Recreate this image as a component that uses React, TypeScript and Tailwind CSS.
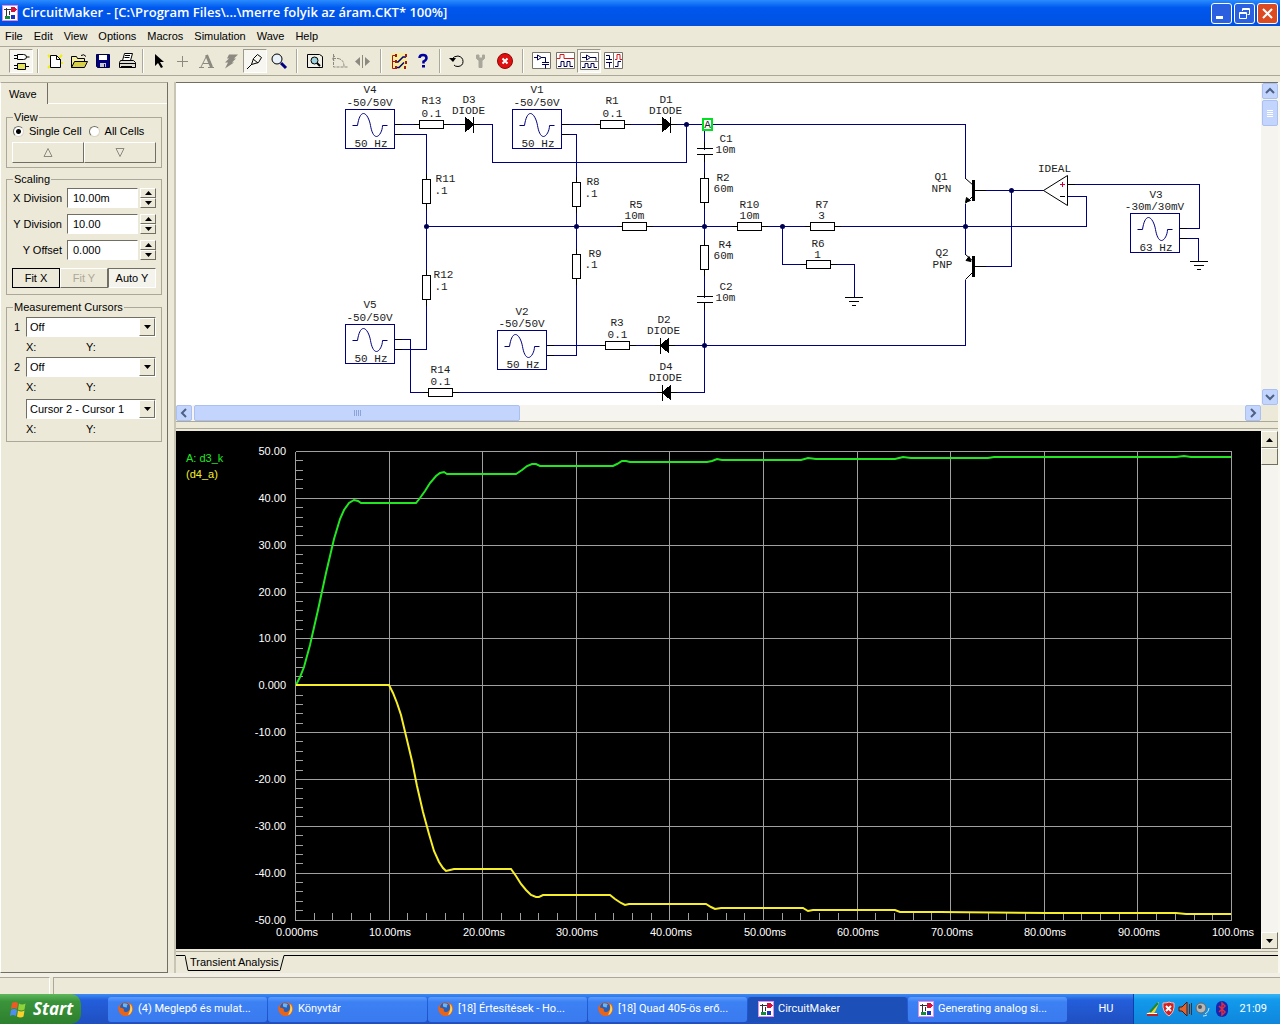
import { useState, type ReactNode } from 'react';
import clsx from 'clsx';

const NAVY = '#000080';

/* ---------- icons ---------- */

function AppIcon() {
  return (
    <svg width="16" height="16" viewBox="0 0 16 16" className="shrink-0" shapeRendering="crispEdges">
      <rect x="0.5" y="0.5" width="15" height="15" fill="#fff" stroke="#e58be5" />
      <path d="M2 4.500h7M4.500 3v9M7 5.500v4" stroke="#333" fill="none" />
      <path d="M9 2h3l3 2.500l-3 2.500h-3z" fill="#d4143c" />
      <rect x="3" y="11" width="5" height="3" fill="#158a3a" />
      <rect x="9" y="10" width="4" height="4" fill="#1733c4" />
    </svg>
  );
}

function FirefoxIcon() {
  return (
    <svg width="16" height="16" viewBox="0 0 16 16" className="shrink-0">
      <circle cx="7.5" cy="8" r="7" fill="#e8641b" />
      <circle cx="7" cy="6.5" r="5" fill="#2a5fb8" />
      <path d="M5 2.500a5 5 0 0 1 5 1q-2 1-1 3q-2 0-4-1z" fill="#6fb4ea" />
      <path d="M1 4q0 3 3 3l2 1q-1 2 1 3q4 1 6-3l0-6q4 6 0 11q-6 4-10 0q-4-4-2-9z" fill="#e8641b" />
      <path d="M12 3q3 3 2 7q-1 3-4 4q3-5 2-11z" fill="#fbd34d" />
    </svg>
  );
}

function WindowsFlag() {
  return (
    <svg width="18" height="18" viewBox="0 0 18 18" className="shrink-0">
      <path d="M3 3q3-2 6 0l-1 6q-3-2-6 0z" fill="#ee5a24" />
      <path d="M10 3.500q3 2 6.500 0l-1 6q-3 2-6.500 0z" fill="#8ed23c" />
      <path d="M2 10q3-2 6 0l-1 6q-3-2-6 0z" fill="#4f8df0" />
      <path d="M9 10.500q3 2 6.500 0l-1 6q-3 2-6.500 0z" fill="#fccf2b" />
    </svg>
  );
}

function Icon({ children }: { children: ReactNode }) {
  return (
    <svg width="22" height="22" viewBox="1 1 22 22" fill="none" stroke="#000" className="block">
      {children}
    </svg>
  );
}

const icons = {
  gates: (
    <Icon>
      <path d="M8.500 5.500h6q3 0 3 2.500t-3 2.500h-6zM5 6.500h3M5 9.500h3M17.500 8h3" fill="#fff" />
      <path d="M8.500 14.500h8v6h-8zM5 16.500h3M5 19.500h3M17 17.500h3" fill="#e4e45c" />
    </Icon>
  ),
  newFile: (
    <Icon>
      <path d="M5 6l3 3M5 19l3-3M19 6l-3 3M20 14h-3" stroke="#f0f000" strokeWidth="2" />
      <path d="M7.500 6.500h6l4 4v8h-10z" fill="#fff" />
      <path d="M13.500 6.500v4h4" />
    </Icon>
  ),
  open: (
    <Icon>
      <path d="M4.500 18.500v-11h5l1 2h7v3" fill="#f4f0a0" />
      <path d="M4.500 18.500l3-6h13l-3 6z" fill="#d8d048" />
      <path d="M14 6.500q3-2 5 1" />
    </Icon>
  ),
  save: (
    <Icon>
      <path d="M5.500 5.500h13v13h-12l-1-1z" fill="#000080" stroke="#000040" />
      <path d="M8 6h8v5h-8z" fill="#fff" stroke="none" />
      <path d="M9 14h6v4h-6z" fill="#c8c8c8" stroke="none" />
      <path d="M13 15h1v3h-1z" fill="#000080" stroke="none" />
    </Icon>
  ),
  print: (
    <Icon>
      <path d="M7.500 11.500l2-7h8l-2 7" fill="#fff" />
      <path d="M10 6.500h5M9.500 8.500h5" />
      <path d="M5.500 11.500h13l2 2v5h-16v-5z" fill="#dedcd0" />
      <path d="M4.500 14.500h16M6 17.500h11" />
    </Icon>
  ),
  select: (
    <Icon>
      <path d="M8 5v12l3-3l3 5l2-1l-3-5h4z" fill="#000" stroke="none" />
    </Icon>
  ),
  plus: (
    <Icon>
      <path d="M6 12.500h11M11.500 7v11" stroke="#8c8a80" />
    </Icon>
  ),
  text: (
    <Icon>
      <path d="M4 18.500h5M13 18.500h6M6 18l6-12l5 12M8 14.500h7" stroke="#8c8a80" />
      <path d="M11.500 6l5 12" stroke="#8c8a80" strokeWidth="3" />
    </Icon>
  ),
  bolt: (
    <Icon>
      <path d="M10 5.500h9l-4 4h2l-4 4h2l-9 6l3-6h-3l4-4h-2z" fill="#8c8a80" stroke="none" />
    </Icon>
  ),
  probe: (
    <Icon>
      <path d="M4 20l5-6l2-5l4-4l4 3l-3 4l-5 2z" stroke="none" fill="#f8f8f0" />
      <path d="M4 20l5-5M8.500 15.500l2-6l4-4l4 3l-3 5zM10 10l5 4" />
    </Icon>
  ),
  zoom: (
    <Icon>
      <circle cx="10" cy="10" r="5" fill="#e8f2f8" />
      <path d="M14 14l5 5" stroke="#000080" strokeWidth="3" />
    </Icon>
  ),
  fit: (
    <Icon>
      <path d="M4.500 5.500h12l3 2v11h-15z" fill="#f2f1e8" />
      <circle cx="11.500" cy="11.500" r="3.500" fill="#9ed2dc" />
      <path d="M14 14l3 3" strokeWidth="2" />
    </Icon>
  ),
  rotate: (
    <Icon>
      <path d="M6.500 5v13h14M6 9.500h5M8 7l-3 2.500l3 2.500M11 9.500q6 1 6 8" stroke="#8c8a80" strokeDasharray="3 1" />
    </Icon>
  ),
  mirror: (
    <Icon>
      <path d="M11.500 6v13" stroke="#8c8a80" />
      <path d="M9 8v9l-5-4.500zM14 8v9l5-4.500z" fill="#8c8a80" stroke="none" />
    </Icon>
  ),
  check: (
    <Icon>
      <path d="M4 4h16v16h-16z" fill="#f6ee9c" stroke="none" />
      <path d="M8 6.500h-2.500v13h3M5.500 12.500h4" stroke="#a01818" />
      <path d="M9 13h2l5-5h3M9 18.500h3l5-5" stroke="#000080" strokeWidth="1.500" />
      <path d="M8 5h2v3h-2zM18 5h2v3h-2zM8 11h2v3h-2zM18 12h2v3h-2zM8 17h2v3h-2zM17 17h2v3h-2z" fill="#a01818" stroke="none" />
    </Icon>
  ),
  help: (
    <Icon>
      <path d="M8.500 9q0-3 3.500-3t3.500 3q0 2-3 3.500v2" stroke="#0000a0" strokeWidth="2.500" />
      <path d="M11 16h3v2.500h-3z" fill="#0000a0" stroke="none" />
    </Icon>
  ),
  undo: (
    <Icon>
      <path d="M7 10q2-3 6-3q5 1 5 5.500t-5 5q-3 0-4-1.500" />
      <path d="M4 9h7l-3 4z" fill="#000" stroke="none" />
    </Icon>
  ),
  wrench: (
    <Icon>
      <path d="M7.500 6v3.500l2.500 2v7h3v-7l2.500-2v-3.500l-2 0v3h-3.500v-3z" fill="#a9a79b" stroke="#a9a79b" />
    </Icon>
  ),
  stop: (
    <Icon>
      <circle cx="12" cy="12" r="7.500" fill="#e01010" stroke="#8c0808" />
      <path d="M9.500 9.500l5 5M14.500 9.500l-5 5" stroke="#fff" strokeWidth="2" />
    </Icon>
  ),
  schematic: (
    <Icon>
      <path d="M3.500 3.500h18v16h-18z" fill="#fff" stroke="#76746a" />
      <path d="M5 8.500h3M8.500 6v5l4-2.500zM12 8.500h4.500v5M13 13.500h7M13 15.500h7M16.500 15.500v4" stroke="#000050" />
    </Icon>
  ),
  waves: (
    <Icon>
      <path d="M3.500 3.500h18v16h-18z" fill="#fff" stroke="#76746a" />
      <path d="M4 9.500h3v-4h4v4h10" stroke="#d81818" />
      <path d="M5 17.500h3v-5h3v5h3v-5h3v5h3" stroke="#000050" />
    </Icon>
  ),
  splitH: (
    <Icon>
      <path d="M3.500 3.500h18v17h-18z" fill="#fff" stroke="#76746a" />
      <path d="M3 12.500h18" stroke="#76746a" />
      <path d="M5 8.500h4M9.500 6v5l4-2.500zM13 8.500h6v3M5 18.500h3v-4h3v4h3v-4h3v4h3" stroke="#000050" />
    </Icon>
  ),
  splitV: (
    <Icon>
      <path d="M3.500 3.500h18v16h-18z" fill="#fff" stroke="#76746a" />
      <path d="M12.500 3v16" stroke="#76746a" />
      <path d="M5 6.500h3.500v4M5 10.500h6M5 13.500h6M8.500 13.500v5M14 17.500h3v-5h3" stroke="#000050" />
      <path d="M14 10.500h2v-5h3v5h2" stroke="#d81818" />
    </Icon>
  ),
};

/* ---------- toolbar ---------- */

type ToolProps = { icon: ReactNode; label: string; pressed?: boolean };

function Tool({ icon, label, pressed }: ToolProps) {
  return (
    <button
      type="button"
      aria-label={label}
      className={clsx(
        'flex h-6 w-6 items-center justify-center border',
        pressed ? 'border-t-[#9d9a8b] border-l-[#9d9a8b] border-r-white border-b-white bg-[#f7f6f0]' : 'border-transparent',
      )}
    >
      {icon}
    </button>
  );
}

function Separator({ className = 'w-3' }: { className?: string }) {
  return (
    <div className={clsx('flex h-6 justify-center', className)}>
      <div className="w-[2px] border-l border-[#aca899] bg-white" />
    </div>
  );
}

function Toolbar() {
  return (
    <div className="flex h-[30px] items-center border-t border-b border-[#aca899] pl-[9px]">
      <Tool icon={icons.gates} label="Parts" pressed />
      <Separator className="w-[10px]" />
      <Tool icon={icons.newFile} label="New" />
      <Tool icon={icons.open} label="Open" />
      <Tool icon={icons.save} label="Save" />
      <Tool icon={icons.print} label="Print" />
      <Separator className="w-2" />
      <Tool icon={icons.select} label="Select" />
      <Tool icon={icons.plus} label="Wire" />
      <Tool icon={icons.text} label="Text" />
      <Tool icon={icons.bolt} label="Delete" />
      <Tool icon={icons.probe} label="Probe" pressed />
      <Tool icon={icons.zoom} label="Zoom" />
      <Separator />
      <Tool icon={icons.fit} label="Fit" />
      <Tool icon={icons.rotate} label="Rotate" />
      <Tool icon={icons.mirror} label="Mirror" />
      <Separator />
      <Tool icon={icons.check} label="Digital options" />
      <Tool icon={icons.help} label="Help" />
      <Separator className="w-[10px]" />
      <Tool icon={icons.undo} label="Reset" />
      <Tool icon={icons.wrench} label="Setup" />
      <Tool icon={icons.stop} label="Stop" />
      <Separator />
      <Tool icon={icons.schematic} label="Schematic" />
      <Tool icon={icons.waves} label="Waveforms" />
      <Tool icon={icons.splitH} label="Split horizontally" pressed />
      <Tool icon={icons.splitV} label="Split vertically" />
    </div>
  );
}

/* ---------- title bar and menu ---------- */

function TitleBar() {
  const button = 'flex h-[21px] w-[21px] items-center justify-center rounded-[3px] border border-white';
  return (
    <header className="flex h-[26px] items-center bg-linear-to-b from-[#2a8bff] via-[#0058ee] via-30% to-[#0050e0] pr-[2px] pl-[2px]">
      <AppIcon />
      <h1 className="ml-1 flex-1 truncate font-['Open_Sans','Liberation_Sans',sans-serif] text-[13px] font-semibold text-white">
        CircuitMaker - [C:\Program Files\...\merre folyik az áram.CKT* 100%]
      </h1>
      <div className="flex gap-[2px]">
        <button type="button" aria-label="Minimize" className={clsx(button, 'bg-[#2a5fe0]')}>
          <svg width="17" height="17" viewBox="0 0 17 17">
            <path d="M3 11h7v3h-7z" fill="#fff" />
          </svg>
        </button>
        <button type="button" aria-label="Restore" className={clsx(button, 'bg-[#2a5fe0]')}>
          <svg width="17" height="17" viewBox="0 0 17 17" fill="none" stroke="#fff">
            <path d="M3.500 7.500h7v6h-7zM3 8.500h8M6.500 6v-2.500h7v6h-2M6 4.500h8" />
          </svg>
        </button>
        <button type="button" aria-label="Close" className={clsx(button, 'bg-[#dc4a22]')}>
          <svg width="17" height="17" viewBox="0 0 17 17" stroke="#fff" strokeWidth="2">
            <path d="M4 4l9 9M13 4l-9 9" />
          </svg>
        </button>
      </div>
    </header>
  );
}

const menus = ['File', 'Edit', 'View', 'Options', 'Macros', 'Simulation', 'Wave', 'Help'];

function MenuBar() {
  return (
    <nav className="flex h-5 items-center gap-[11px] pl-[5px]">
      {menus.map((menu) => (
        <button key={menu} type="button">
          {menu}
        </button>
      ))}
    </nav>
  );
}

/* ---------- wave panel ---------- */

const raised = 'border border-t-white border-l-white border-r-[#716f64] border-b-[#716f64]';
const sunken = 'border border-t-[#716f64] border-l-[#716f64] border-r-white border-b-white';

function Group({ title, className, children }: { title: string; className?: string; children: ReactNode }) {
  return (
    <fieldset className={clsx('mx-[5px] min-w-0 border border-[#aca899] px-[5px]', className)}>
      <legend className="ml-[1px] h-[14px] px-[1px] leading-[14px]">{title}</legend>
      {children}
    </fieldset>
  );
}

function CellOption({ label, checked }: { label: string; checked?: boolean }) {
  return (
    <label className="flex items-center gap-[5px] whitespace-nowrap">
      <input
        type="radio"
        name="cells"
        defaultChecked={checked}
        className="ml-[1px] h-[11px] w-[11px] appearance-none rounded-full border border-t-[#716f64] border-l-[#716f64] border-r-[#d8d5c6] border-b-[#d8d5c6] bg-white checked:bg-[radial-gradient(circle,#000_2px,#fff_3px)]"
      />
      {label}
    </label>
  );
}

function Spin({ label, value }: { label: string; value: string }) {
  const [current, setCurrent] = useState(value);
  return (
    <div className="flex h-[26px] items-start">
      <label className="flex flex-1 items-center justify-end pr-[6px] leading-5 whitespace-nowrap">
        {label}
        <input
          type="text"
          value={current}
          onChange={(e) => setCurrent(e.target.value)}
          className={clsx('-mr-1 ml-[5px] h-5 w-[71px] bg-white px-[5px] outline-none', sunken)}
        />
      </label>
      <div className="flex w-4 flex-col">
        <button type="button" aria-label={`${label} up`} className={clsx('flex h-[10px] items-center justify-center', raised)}>
          <svg width="7" height="4" viewBox="0 0 7 4">
            <path d="M0 4l3.500-4l3.500 4z" />
          </svg>
        </button>
        <button type="button" aria-label={`${label} down`} className={clsx('flex h-[10px] items-center justify-center', raised)}>
          <svg width="7" height="4" viewBox="0 0 7 4">
            <path d="M0 0l3.500 4l3.500-4z" />
          </svg>
        </button>
      </div>
    </div>
  );
}

function Cursor({ index, option, className }: { index?: string; option: string; className?: string }) {
  return (
    <div className={className}>
      <div className="flex items-center">
        <label htmlFor={`cursor-${index ?? 'diff'}`} className="w-[14px] pl-[2px]">
          {index}
        </label>
        <div className="relative flex-1">
          <select
            id={`cursor-${index ?? 'diff'}`}
            aria-label={index ? undefined : 'Difference'}
            className={clsx('block h-5 w-full appearance-none bg-white pl-[3px] outline-none', sunken)}
          >
            <option>{option}</option>
          </select>
          <span className={clsx('pointer-events-none absolute top-[1px] right-[1px] flex h-[18px] w-4 items-center justify-center bg-[#ece9d8]', raised)}>
            <svg width="7" height="4" viewBox="0 0 7 4">
              <path d="M0 0l3.500 4l3.500-4z" />
            </svg>
          </span>
        </div>
      </div>
      <div className="flex h-5 pl-[14px] leading-5">
        <span className="w-[60px]">X:</span>
        <span>Y:</span>
      </div>
    </div>
  );
}

function WavePanel() {
  return (
    <aside className="flex w-[168px] shrink-0 flex-col border border-t-[#aca899] border-r-[#716f64] border-b-[#716f64] border-l-white">
      <div className="flex h-[21px]">
        <button type="button" className="w-[47px] border-r border-[#716f64] text-left indent-2 leading-5">
          Wave
        </button>
        <div className="flex-1 border-b border-white" />
      </div>
      <Group title="View" className="mt-[6px] h-[58px]">
        <div className="flex h-[14px] items-center gap-[6px]">
          <CellOption label="Single Cell" checked />
          <CellOption label="All Cells" />
        </div>
        <div className="mt-1 flex">
          <button type="button" aria-label="Previous cell" className={clsx('flex h-[21px] flex-1 items-center justify-center', raised)}>
            <svg width="10" height="9" viewBox="0 0 10 9" fill="none" stroke="#8c8a80">
              <path d="M1 8.500l4-8l4 8z" />
            </svg>
          </button>
          <button type="button" aria-label="Next cell" className={clsx('flex h-[21px] flex-1 items-center justify-center', raised)}>
            <svg width="10" height="9" viewBox="0 0 10 9" fill="none" stroke="#8c8a80">
              <path d="M1 0.500l4 8l4-8z" />
            </svg>
          </button>
        </div>
      </Group>
      <Group title="Scaling" className="mt-1 h-[123px]">
        <div className="pt-[2px]">
          <Spin label="X Division" value="10.00m" />
          <Spin label="Y Division" value="10.00" />
          <Spin label="Y Offset" value="0.000" />
        </div>
        <div className="mt-[2px] flex h-5">
          <button type="button" className="flex-1 border border-black">
            Fit X
          </button>
          <button type="button" disabled className={clsx('flex-1 text-[#aca899]', raised)}>
            Fit Y
          </button>
          <button type="button" className={clsx('flex-1 bg-[#f4f3ec]', sunken)}>
            Auto Y
          </button>
        </div>
      </Group>
      <Group title="Measurement Cursors" className="mt-[5px] h-[142px]">
        <Cursor index="1" option="Off" className="mt-[3px]" />
        <Cursor index="2" option="Off" />
        <Cursor option="Cursor 2 - Cursor 1" className="mt-[2px]" />
      </Group>
    </aside>
  );
}

/* ---------- schematic ---------- */

type Point = { x: number; y: number };

// every character takes a 7px cell that starts at x
function Label({ x, y, text }: Point & { text: string }) {
  return (
    <text x={x + text.length * 3.5} y={y} textAnchor="middle" fill="#222">
      {text}
    </text>
  );
}

// x, y is the centre of the body
function Resistor({ x, y, vertical }: Point & { vertical?: boolean }) {
  return vertical ? (
    <g stroke="#000" fill="#fff">
      <path d={`M${x} ${y - 18}v36`} />
      <rect x={x - 4} y={y - 12} width="8" height="24" />
    </g>
  ) : (
    <g stroke="#000" fill="#fff">
      <path d={`M${x - 18} ${y}h36`} />
      <rect x={x - 12} y={y - 4} width="24" height="8" />
    </g>
  );
}

function Diode({ x, y, left }: Point & { left?: boolean }) {
  return (
    <g stroke="#000" fill="#000">
      <path d={`M${x - 10} ${y}h20`} />
      {left ? (
        <path d={`M${x - 4} ${y - 8}v16M${x - 4} ${y}l8-7v14z`} />
      ) : (
        <path d={`M${x + 4} ${y - 8}v16M${x + 4} ${y}l-8-7v14z`} />
      )}
    </g>
  );
}

function Capacitor({ x, y }: Point) {
  return (
    <g stroke="#000">
      <rect x={x - 8} y={y - 2} width="17" height="4" fill="#fff" stroke="none" />
      <path d={`M${x - 8} ${y - 3}h16M${x - 8} ${y + 3}h16M${x} ${y - 10}v7M${x} ${y + 3}v7`} />
    </g>
  );
}

function Ground({ x, y }: Point) {
  return <path stroke="#000" d={`M${x - 9} ${y}h18M${x - 5} ${y + 4}h10M${x - 2} ${y + 8}h4`} />;
}

function Source({ x, y, hz = '50 Hz' }: Point & { hz?: string }) {
  return (
    <g>
      <rect x={x} y={y} width="49" height="39" fill="#fff" stroke={NAVY} />
      <path
        d={`M${x + 7} ${y + 16}h5c1-7 3-12 6-12s6 6 7 12s3 11 6 11s6-6 6-11h5`}
        fill="none"
        stroke={NAVY}
        shapeRendering="auto"
      />
      <path d={`M${x + 49} ${y + 15}h7M${x + 49} ${y + 25}h7`} stroke="#000" />
      <Label x={x + 8} y={y + 37} text={hz} />
    </g>
  );
}

const wires = [
  'M394.500 124.500H492.500V162.500H686.500V124.500',
  'M394.500 134.500H426.500V349.500H394.500',
  'M561.500 124.500H965.500V178.500',
  'M561.500 134.500H576.500V355.500H546.500',
  'M426.500 226.500H1086.500V196.500H1067.500',
  'M704.500 124.500V392.500H410.500V339.500H394.500',
  'M546.500 345.500H965.500V279.500',
  'M965.500 203.500V254.500',
  'M782.500 226.500V264.500H854.500V297.500',
  'M974.500 190.500H1043.500M1011.500 190.500V266.500H974.500',
  'M1067.500 184.500H1199.500V228.500H1180.500',
  'M1180.500 238.500H1198.500V261.500',
];

const joints: [number, number][] = [
  [686.5, 124.5],
  [426.5, 226.5],
  [576.5, 226.5],
  [704.5, 226.5],
  [782.5, 226.5],
  [965.5, 226.5],
  [1011.5, 190.5],
  [704.5, 345.5],
];

const labels: [number, number, string][] = [
  [363, 93, 'V4'],
  [345, 106, '-50/50V'],
  [421, 104, 'R13'],
  [421, 117, '0.1'],
  [462, 103, 'D3'],
  [451, 114, 'DIODE'],
  [530, 93, 'V1'],
  [512, 106, '-50/50V'],
  [605, 104, 'R1'],
  [602, 117, '0.1'],
  [659, 103, 'D1'],
  [648, 114, 'DIODE'],
  [719, 142, 'C1'],
  [715, 153, '10m'],
  [435, 182, 'R11'],
  [434, 194, '.1'],
  [586, 185, 'R8'],
  [584, 197, '.1'],
  [716, 181, 'R2'],
  [713, 192, '60m'],
  [629, 208, 'R5'],
  [624, 219, '10m'],
  [739, 208, 'R10'],
  [739, 219, '10m'],
  [815, 208, 'R7'],
  [818, 219, '3'],
  [718, 248, 'R4'],
  [713, 259, '60m'],
  [811, 247, 'R6'],
  [814, 258, '1'],
  [588, 257, 'R9'],
  [584, 268, '.1'],
  [433, 278, 'R12'],
  [434, 290, '.1'],
  [719, 290, 'C2'],
  [715, 301, '10m'],
  [363, 308, 'V5'],
  [345, 321, '-50/50V'],
  [515, 315, 'V2'],
  [497, 327, '-50/50V'],
  [610, 326, 'R3'],
  [607, 338, '0.1'],
  [657, 323, 'D2'],
  [646, 334, 'DIODE'],
  [430, 373, 'R14'],
  [430, 385, '0.1'],
  [659, 370, 'D4'],
  [648, 381, 'DIODE'],
  [934, 180, 'Q1'],
  [931, 192, 'NPN'],
  [935, 256, 'Q2'],
  [932, 268, 'PNP'],
  [1037, 172, 'IDEAL'],
  [1149, 198, 'V3'],
  [1123, 210, '-30m/30mV'],
];

function Schematic() {
  return (
    <svg
      width="1085"
      height="322"
      viewBox="176 83 1085 322"
      shapeRendering="crispEdges"
      fill="none"
      className="block shrink-0 font-['Liberation_Mono',monospace] text-[11px]"
    >
      <path d={wires.join('')} stroke={NAVY} />
      {joints.map(([x, y]) => (
        <circle key={`${x}-${y}`} cx={x} cy={y} r="2.500" fill="#000050" shapeRendering="auto" />
      ))}

      <Source x={345.5} y={109.5} />
      <Source x={512.5} y={109.5} />
      <Source x={345.5} y={324.5} />
      <Source x={497.5} y={330.5} />
      <Source x={1130.5} y={213.5} hz="63 Hz" />

      <Resistor x={431.5} y={124.5} />
      <Resistor x={612.5} y={124.5} />
      <Resistor x={634.5} y={226.5} />
      <Resistor x={749.5} y={226.5} />
      <Resistor x={822.5} y={226.5} />
      <Resistor x={818.5} y={264.5} />
      <Resistor x={617.5} y={345.5} />
      <Resistor x={440.5} y={392.5} />
      <Resistor x={426.5} y={191.5} vertical />
      <Resistor x={426.5} y={287.5} vertical />
      <Resistor x={576.5} y={194.5} vertical />
      <Resistor x={576.5} y={266.5} vertical />
      <Resistor x={704.5} y={190.5} vertical />
      <Resistor x={704.5} y={257.5} vertical />

      <Diode x={469.5} y={124.5} />
      <Diode x={666.5} y={124.5} />
      <Diode x={664.5} y={345.5} left />
      <Diode x={666.5} y={392.5} left />

      <Capacitor x={704.5} y={151.5} />
      <Capacitor x={704.5} y={299.5} />
      <Ground x={853.5} y={297.5} />
      <Ground x={1198.5} y={261.5} />

      {/* transistors */}
      <g stroke="#000" shapeRendering="auto">
        <path d="M965.500 178.500l8 7M973.500 195.500l-8 8M965.500 254.500l8 7M973.500 271.500l-8 8M974 190.500h12M974 266.500h12" />
        <path d="M973.500 180v21M973.500 256v21" strokeWidth="3" />
        <path d="M965.500 202.500l1-5l4 3zM971 261.500l-5-1l3-4z" fill="#000" />
      </g>

      {/* op-amp */}
      <path d="M1043.500 190.500l24-15v30z" fill="#fff" stroke="#000" shapeRendering="auto" />
      <path d="M1060 184.500h5M1062.500 182v5" stroke="#d00030" />
      <path d="M1060 196.500h5M1067.500 184.500h7" stroke="#000" />

      {/* probe */}
      <rect x="703" y="119" width="9" height="11" fill="#fff" stroke="#00e020" strokeWidth="2" />
      <Label x={704} y={128} text="A" />

      {labels.map(([x, y, text]) => (
        <Label key={`${x}-${y}`} x={x} y={y} text={text} />
      ))}
    </svg>
  );
}

/* ---------- scroll bars ---------- */

const xpThumb = 'rounded-[2px] border border-[#a9c0f0] bg-[#c4d5fd]';

function XpArrow({ d, label }: { d: string; label: string }) {
  return (
    <button type="button" aria-label={label} className={clsx('flex h-4 w-4 shrink-0 items-center justify-center', xpThumb)}>
      <svg width="10" height="10" viewBox="0 0 10 10" fill="none" stroke="#4d6185" strokeWidth="2">
        <path d={d} />
      </svg>
    </button>
  );
}

function ClassicArrow({ d, label }: { d: string; label: string }) {
  return (
    <button type="button" aria-label={label} className={clsx('flex h-[17px] w-[17px] items-center justify-center bg-[#ece9d8]', raised)}>
      <svg width="7" height="4" viewBox="0 0 7 4">
        <path d={d} />
      </svg>
    </button>
  );
}

function SchematicPane() {
  return (
    <section className="border-t border-b border-t-[#716f64] border-b-[#aca899]">
      <div className="flex h-[322px]">
        <div className="min-w-0 flex-1 overflow-hidden bg-white">
          <Schematic />
        </div>
        <div className="flex w-[17px] flex-col items-center bg-[#f5f4ee]">
          <XpArrow label="Scroll up" d="M1 7l4-4l4 4" />
          <div className={clsx('mt-[1px] flex h-[26px] w-4 flex-col items-center justify-center gap-[1px]', xpThumb)}>
            <span className="h-[1px] w-[6px] bg-white" />
            <span className="h-[1px] w-[6px] bg-white" />
            <span className="h-[1px] w-[6px] bg-white" />
            <span className="h-[1px] w-[6px] bg-white" />
          </div>
          <div className="flex-1" />
          <XpArrow label="Scroll down" d="M1 3l4 4l4-4" />
        </div>
      </div>
      <div className="flex h-4 items-center bg-[#f5f4ee]">
        <XpArrow label="Scroll left" d="M7 1l-4 4l4 4" />
        <div className={clsx('ml-[2px] flex h-4 w-[326px] items-center justify-center gap-[1px]', xpThumb)}>
          <span className="h-[6px] w-[1px] bg-[#8ca4d8]" />
          <span className="h-[6px] w-[1px] bg-[#8ca4d8]" />
          <span className="h-[6px] w-[1px] bg-[#8ca4d8]" />
          <span className="h-[6px] w-[1px] bg-[#8ca4d8]" />
        </div>
        <div className="flex-1" />
        <XpArrow label="Scroll right" d="M3 1l4 4l-4 4" />
        <div className="h-4 w-[17px] bg-[#ece9d8]" />
      </div>
    </section>
  );
}

/* ---------- transient analysis plot ---------- */

const LEFT = 119.5;
const TOP = 20.5;
const STEP_X = 93.6;
const STEP_Y = 46.85;

const xTicks = ['0.000ms', '10.00ms', '20.00ms', '30.00ms', '40.00ms', '50.00ms', '60.00ms', '70.00ms', '80.00ms', '90.00ms', '100.0ms'];
const yTicks = ['50.00', '40.00', '30.00', '20.00', '10.00', '0.000', '-10.00', '-20.00', '-30.00', '-40.00', '-50.00'];

const green =
  '120,254 124,246 128,236 134,214 142,179 150,142 158,108 164,88 168,79 173,72 178,69 182,70 185,72 240,72 244,67 249,60 254,52 260,45 264,42 268,41 271,43 340,43 346,39 351,35 356,33 360,33 364,35 437,35 441,33 446,30 450,30 454,31 531,31 536,30 541,28 546,29 625,29 632,27 640,28 719,28 727,26 735,27 812,27 818,26 1000,26 1008,25 1015,26 1055,26';
const yellow =
  '120,254 213,254 217,262 221,272 225,284 231,309 236,330 241,355 247,381 253,403 258,420 263,431 267,437 270,440 274,439 278,438 335,438 340,445 345,453 350,459 355,464 360,466 363,466 367,464 434,464 439,468 445,472 449,474 453,473 530,473 535,476 539,478 545,477 627,477 632,480 637,479 719,479 724,481 764,481 870,482 1000,482 1010,483 1055,483';

function Plot() {
  return (
    <svg
      viewBox="0 0 1085 518"
      preserveAspectRatio="xMinYMin meet"
      fill="none"
      className="block min-h-0 min-w-0 flex-1 font-['Liberation_Sans',sans-serif] text-[11px]"
    >
      <g stroke="#a0a0a0" shapeRendering="crispEdges">
        {xTicks.map((tick, i) => (
          <path key={tick} d={`M${Math.floor(LEFT + i * STEP_X) + 0.5} ${TOP}v469`} />
        ))}
        {yTicks.map((tick, i) => (
          <path key={tick} d={`M${LEFT} ${Math.floor(TOP + i * STEP_Y) + 0.5}h936`} />
        ))}
        {Array.from({ length: 50 }, (_, i) => (
          <path key={i} d={`M${LEFT} ${Math.floor(TOP + (i * STEP_Y) / 5) + 0.5}h7`} />
        ))}
        {Array.from({ length: 50 }, (_, i) => (
          <path key={i} d={`M${Math.floor(LEFT + (i * STEP_X) / 5) + 0.5} 482v7`} />
        ))}
      </g>
      <g fill="#fff">
        {yTicks.map((tick, i) => (
          <text key={tick} x="110" y={Math.floor(TOP + i * STEP_Y) + 4} textAnchor="end">
            {tick}
          </text>
        ))}
        {xTicks.map((tick, i) => (
          <text key={tick} x={Math.round(LEFT + i * STEP_X) + 1} y="505" textAnchor="middle">
            {tick}
          </text>
        ))}
      </g>
      <text x="10" y="31" fill="#22e622">
        A: d3_k
      </text>
      <text x="10" y="47" fill="#f5ee28">
        (d4_a)
      </text>
      <polyline points={green} stroke="#22e622" strokeWidth="2" />
      <polyline points={yellow} stroke="#f5ee28" strokeWidth="2" />
    </svg>
  );
}

function PlotPane() {
  return (
    <section className="mt-[6px] flex flex-1 flex-col border-t border-[#aca899] pt-[2px]">
      <div className="flex flex-1">
        <div className="flex min-w-0 flex-1 bg-black">
          <Plot />
        </div>
        <div className="flex w-[17px] flex-col bg-[#f5f4ee]">
          <ClassicArrow label="Scroll up" d="M0 4l3.500-4l3.500 4z" />
          <div className={clsx('h-[17px] bg-[#ece9d8]', raised)} />
          <div className="flex-1" />
          <ClassicArrow label="Scroll down" d="M0 0l3.500 4l3.500-4z" />
        </div>
      </div>
      <div className="mt-[2px] flex h-[22px] items-start border-t border-[#aca899] pt-[3px]">
        <div className="w-[9px] border-t border-black" />
        <svg width="4" height="16" viewBox="0 0 4 16" fill="none" stroke="#000">
          <path d="M0 0.500l3 15h1" />
        </svg>
        <button type="button" className="h-4 border-b border-black px-[1px] leading-[15px]">
          Transient Analysis
        </button>
        <svg width="5" height="16" viewBox="0 0 5 16" fill="none" stroke="#000">
          <path d="M0 15.500l4-15h1" />
        </svg>
        <div className="flex-1 border-t border-black" />
      </div>
    </section>
  );
}

/* ---------- taskbar ---------- */

const tasks = [
  { title: '(4) Meglepő és mulat...', icon: <FirefoxIcon /> },
  { title: 'Könyvtár', icon: <FirefoxIcon /> },
  { title: '[18] Értesítések - Ho...', icon: <FirefoxIcon /> },
  { title: '[18] Quad 405-ös erő...', icon: <FirefoxIcon /> },
  { title: 'CircuitMaker', icon: <AppIcon />, active: true },
  { title: 'Generating analog si...', icon: <AppIcon /> },
];

function Taskbar() {
  return (
    <footer className="flex h-[30px] items-stretch bg-linear-to-b from-[#3f8cf3] via-[#245edb] via-20% to-[#1f4fc0] font-['Roboto','Liberation_Sans',sans-serif] text-white">
      <button
        type="button"
        className="flex w-[81px] items-center gap-[6px] rounded-r-[10px] bg-linear-to-b from-[#5fb85c] via-[#3a943a] via-25% to-[#2d7f2d] pl-[9px] font-['Open_Sans','Liberation_Sans',sans-serif] text-[17px] font-bold italic"
      >
        <WindowsFlag />
        Start
      </button>
      <div className="ml-[27px] flex flex-1 items-center gap-[1px]">
        {tasks.map((task) => (
          <button
            key={task.title}
            type="button"
            className={clsx(
              'flex h-[25px] min-w-0 flex-1 items-center gap-1 rounded-[3px] pl-[10px]',
              task.active ? 'bg-[#1c4fb8]' : 'bg-linear-to-b from-[#5a9bff] via-[#3c81f3] via-20% to-[#3a7af0]',
            )}
          >
            {task.icon}
            <span className="truncate">{task.title}</span>
          </button>
        ))}
      </div>
      <button type="button" className="w-[66px] pl-3">
        HU
      </button>
      <div className="flex w-[147px] items-center justify-between border-l border-[#0b3fae] bg-linear-to-b from-[#35b4f5] via-[#129aec] via-20% to-[#0f86dc] pr-[13px] pl-[11px]">
        <svg width="88" height="16" viewBox="0 0 88 16">
          <path d="M1 13l6-3l6-9l1 1l-4 9l-3 3z" fill="#f2d12c" />
          <path d="M2 14h11" stroke="#c02020" strokeWidth="2" />
          <path d="M2 12.500h10" stroke="#fff" />
          <path d="M5 11l8-9" stroke="#158a3a" strokeWidth="2" />
          <path d="M18 2q5 0 6-1q2 1 5 1q1 9-5 13q-7-4-6-13z" fill="#d42020" stroke="#f0c0c0" />
          <path d="M21 5l5 5M26 5l-5 5" stroke="#fff" strokeWidth="2" />
          <path d="M34 6h3l5-5v14l-5-5h-3z" fill="#e0622c" stroke="#4a1a10" />
          <path d="M44.500 3v10M46.500 2v12" stroke="#5a2a1a" />
          <circle cx="56" cy="7" r="5" fill="#b8b8b8" stroke="#666" />
          <circle cx="55" cy="6" r="2" fill="#555" />
          <path d="M60 13q4-2 4-6M58 15q2 0 4-1" fill="none" stroke="#ddd" />
          <rect x="71" y="0" width="12" height="16" rx="6" fill="#1226b4" />
          <path d="M74 5l6 6l-3 3v-12l3 3l-6 6" fill="none" stroke="#e02c3c" strokeWidth="1.500" />
        </svg>
        <time>21:09</time>
      </div>
    </footer>
  );
}

export default function App() {
  return (
    <div className="flex min-h-screen flex-col bg-[#ece9d8] font-['Liberation_Sans',sans-serif] text-[11px] text-black">
      <TitleBar />
      <MenuBar />
      <Toolbar />
      <main className="flex flex-1 pt-[6px]">
        <WavePanel />
        <div className="ml-[6px] flex min-w-0 flex-1 flex-col border-r-2 border-l-2 border-r-[#f8f7f0] border-l-[#c8c5b5]">
          <SchematicPane />
          <PlotPane />
        </div>
      </main>
      <div className="flex h-[21px] gap-[3px] border-t-4 border-[#f2f0e6]">
        <div className="w-[50px] border-t border-r border-t-[#aca899] border-r-white" />
        <div className="flex-1 border-t border-l border-[#aca899]" />
      </div>
      <Taskbar />
    </div>
  );
}
